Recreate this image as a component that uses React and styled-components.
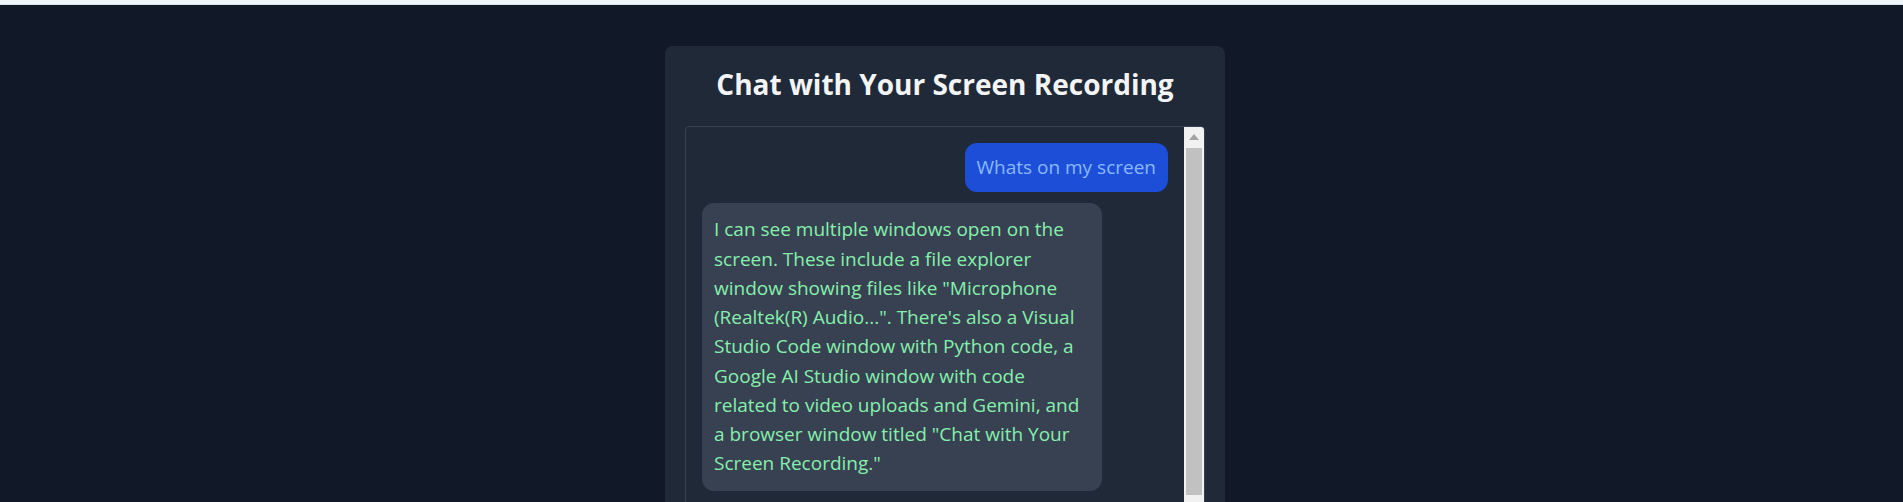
import React from 'react'
import styled, { createGlobalStyle } from 'styled-components'

const GlobalStyle = createGlobalStyle`
  * {
    box-sizing: border-box;
  }
  body {
    margin: 0;
    background: #111827;
    font-family: 'Open Sans', 'Noto Sans', sans-serif;
  }
`

const messages = [
  { from: 'user', text: 'Whats on my screen' },
  {
    from: 'bot',
    text: 'I can see multiple windows open on the screen. These include a file explorer window showing files like "Microphone (Realtek(R) Audio...". There\'s also a Visual Studio Code window with Python code, a Google AI Studio window with code related to video uploads and Gemini, and a browser window titled "Chat with Your Screen Recording."',
  },
]

const App = () => {
  return (
    <>
      <GlobalStyle />
      <TopStrip />
      <Page>
        <Card>
          <Title>Chat with Your Screen Recording</Title>
          <ChatBox>
            <MessageList>
              {messages.map((m, i) => (
                <Bubble key={i} $user={m.from === 'user'}>
                  {m.text}
                </Bubble>
              ))}
            </MessageList>
            <ScrollRail>
              <ArrowButton>
                <svg width='10' height='6' viewBox='0 0 10 6'>
                  <path d='M5 0 L10 6 L0 6 Z' fill='#a3a3a3' />
                </svg>
              </ArrowButton>
              <Thumb />
            </ScrollRail>
          </ChatBox>
        </Card>
      </Page>
    </>
  )
}

const TopStrip = styled.div`
  height: 5px;
  background: #f0f6f9;
  border-bottom: 1px solid #d8e2e8;
`

const Page = styled.main`
  display: flex;
  justify-content: center;
  padding: 41px 13px 0 0;
`

const Card = styled.section`
  width: 560px;
  background: #1f2937;
  border-radius: 8px;
  padding: 20px;
`

const Title = styled.h1`
  margin: 0 0 24px;
  text-align: center;
  color: #f3f4f6;
  font-size: 28px;
  line-height: 36px;
  font-weight: 700;
`

const ChatBox = styled.div`
  display: flex;
  height: 392px;
  border: 1px solid #374151;
  border-radius: 4px;
  background: #1f2937;
  overflow: hidden;
`

const MessageList = styled.div`
  flex: 1;
  display: flex;
  flex-direction: column;
  gap: 11px;
  padding: 16px;
  overflow: hidden;
`

const ScrollRail = styled.div`
  width: 20px;
  flex-shrink: 0;
  display: flex;
  flex-direction: column;
  background: #f1f1f1;
  padding-bottom: 22px;
`

const ArrowButton = styled.div`
  height: 21px;
  display: flex;
  align-items: center;
  justify-content: center;
  padding-bottom: 1px;
`

const Thumb = styled.div`
  flex: 1;
  margin: 0 2px;
  background: #c1c1c1;
`

const Bubble = styled.div`
  align-self: ${(p) => (p.$user ? 'flex-end' : 'flex-start')};
  max-width: 400px;
  padding: ${(p) => (p.$user ? '10px 12px' : '12px')};
  border-radius: 12px;
  background: ${(p) => (p.$user ? '#1d4ed8' : '#374151')};
  color: ${(p) => (p.$user ? '#8ab8fb' : '#86efac')};
  font-size: 19px;
  line-height: 29.25px;
`

export default App
